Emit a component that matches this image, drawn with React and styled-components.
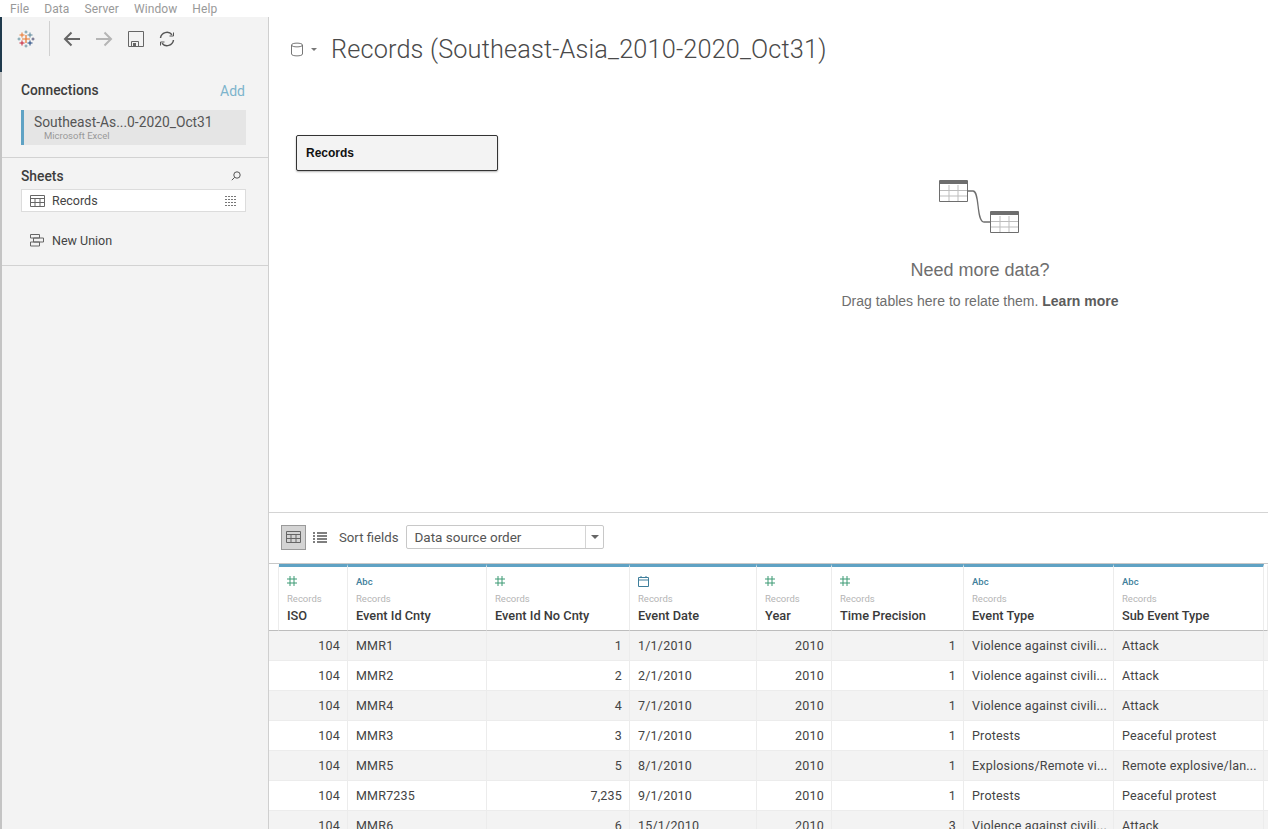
import styled, { createGlobalStyle } from 'styled-components';

const GlobalStyle = createGlobalStyle`
  html, body {
    margin: 0;
    padding: 0;
    background: #fff;
    overflow: hidden;
  }
  * {
    box-sizing: border-box;
  }
`;

const Page = styled.div`
  width: 1268px;
  height: 829px;
  display: flex;
  flex-direction: column;
  overflow: hidden;
  font-family: Roboto, "Liberation Sans", sans-serif;
  color: #333;
`;

const MenuBar = styled.div`
  height: 17px;
  flex: none;
  display: flex;
  gap: 15px;
  padding-left: 10px;
  align-items: center;
  font-size: 12px;
  letter-spacing: 0.1px;
  color: #999;
`;

const Main = styled.div`
  flex: 1;
  display: flex;
  min-height: 0;
`;

const Sidebar = styled.aside`
  width: 269px;
  flex: none;
  background: #f3f3f3;
  border-right: 1px solid #cfcfcf;
  border-left: 2px solid #c4c4c4;
  display: flex;
  flex-direction: column;
  position: relative;
`;

const EdgeMark = styled.div`
  position: absolute;
  left: -2px;
  top: 0;
  width: 2px;
  height: 55px;
  background: #1f3a4d;
`;

const Toolbar = styled.div`
  height: 39px;
  margin-top: 2px;
  display: flex;
  align-items: center;
  padding-left: 14px;
`;

const ToolDivider = styled.div`
  width: 1px;
  height: 35px;
  background: #d0d0d0;
  margin: 0 12px 0 13px;
`;

const ToolButton = styled.div`
  width: 20px;
  height: 20px;
  margin-right: ${(p) => p.$gap ?? 12}px;
  display: flex;
  align-items: center;
  justify-content: center;
`;

const Section = styled.section`
  padding: ${(p) => p.$padding};
  height: ${(p) => p.$height}px;
  flex: none;
  border-bottom: 1px solid #d2d2d2;
`;

const SectionHead = styled.div`
  display: flex;
  justify-content: space-between;
  align-items: center;
  height: 20px;
`;

const SectionTitle = styled.div`
  font-size: 13.8px;
  font-weight: 500;
  color: #3d3d3d;
`;

const AddLink = styled.div`
  font-size: 14px;
  line-height: 18px;
  padding-top: 2px;
  color: #7db4cc;
  margin-right: 23px;
`;

const ConnectionCard = styled.div`
  margin-top: 10px;
  width: 225px;
  height: 35px;
  background: #e5e5e5;
  border-left: 3px solid #5fa2c4;
  padding: 4px 0 0 10px;
`;

const ConnectionName = styled.div`
  font-size: 13.8px;
  line-height: 16px;
  color: #555;
`;

const ConnectionType = styled.div`
  font-size: 9.5px;
  line-height: 12px;
  color: #999;
  padding-left: 10px;
`;

const SheetRow = styled.div`
  width: 225px;
  height: 23px;
  margin-top: 3px;
  display: flex;
  align-items: center;
  background: #fff;
  border: 1px solid #dcdcdc;
  padding: 0 8px 0 8px;
  font-size: 12.5px;
  color: #444;
`;

const SheetLabel = styled.span`
  flex: 1;
  margin-left: ${(p) => p.$gap ?? 7}px;
`;

const UnionRow = styled.div`
  display: flex;
  align-items: center;
  margin: 18px 0 0 9px;
  height: 20px;
  font-size: 12.5px;
  color: #444;
`;

const Content = styled.main`
  flex: 1;
  min-width: 0;
  display: flex;
  flex-direction: column;
`;

const Canvas = styled.div`
  height: 496px;
  flex: none;
  border-bottom: 1px solid #d4d4d4;
`;

const TitleRow = styled.div`
  display: flex;
  align-items: center;
  height: 40px;
  margin-top: 12px;
  padding-left: 22px;
`;

const Title = styled.h1`
  margin: 0 0 0 14px;
  font-size: 25.3px;
  font-weight: 300;
  color: #4a4a4a;
  letter-spacing: 0.15px;
  white-space: nowrap;
`;

const DropArea = styled.div`
  display: flex;
  align-items: flex-start;
`;

const TableChip = styled.div`
  width: 202px;
  height: 36px;
  margin: 66px 0 0 27px;
  background: #f3f3f3;
  border: 1px solid #333;
  border-radius: 2px;
  box-shadow: 0 1px 2px rgba(0, 0, 0, 0.3);
  display: flex;
  align-items: center;
  padding-left: 9px;
  font-family: "Liberation Sans", Arial, sans-serif;
  font-size: 12px;
  font-weight: 700;
  color: #111;
`;

const Hint = styled.div`
  margin: 111px 0 0 342px;
  width: 280px;
  display: flex;
  flex-direction: column;
  align-items: center;
  font-family: "Liberation Sans", Arial, sans-serif;
  color: #6e6e6e;
`;

const HintTitle = styled.div`
  margin-top: 24px;
  font-size: 18px;
  line-height: 20px;
`;

const HintText = styled.div`
  margin-top: 13px;
  font-size: 14px;
  line-height: 16px;
  white-space: nowrap;

  b {
    color: #5c5c5c;
  }
`;

const SortBar = styled.div`
  height: 50px;
  flex: none;
  display: flex;
  align-items: center;
  padding: 0 0 2px 12px;
`;

const ViewToggle = styled.div`
  width: 25px;
  height: 25px;
  display: flex;
  align-items: center;
  justify-content: center;
  background: ${(p) => (p.$active ? '#d4d4d4' : 'transparent')};
  border: 1px solid ${(p) => (p.$active ? '#9a9a9a' : 'transparent')};
  margin-right: ${(p) => p.$gap ?? 0}px;
`;

const SortLabel = styled.span`
  font-size: 13.2px;
  color: #555;
  margin: 0 8px 0 6px;
`;

const SortSelect = styled.div`
  width: 198px;
  height: 24px;
  border: 1px solid #c8c8c8;
  border-radius: 2px;
  display: flex;
  align-items: center;
  font-size: 13.5px;
  color: #555;
  padding-left: 7px;
`;

const SortValue = styled.span`
  flex: 1;
`;

const Caret = styled.span`
  width: 18px;
  height: 22px;
  border-left: 1px solid #d4d4d4;
  display: flex;
  align-items: center;
  justify-content: center;

  &::after {
    content: '';
    border-left: 4px solid transparent;
    border-right: 4px solid transparent;
    border-top: 4px solid #666;
  }
`;

const Grid = styled.div`
  flex: 1;
  min-height: 0;
  overflow: hidden;
  display: grid;
  border-top: 1px solid #c8c8c8;
  grid-template-columns: 10px 69px 139px 143px 127px 75px 132px 150px 150px 4px;
  grid-auto-rows: 30px;
  grid-template-rows: 67px;
  align-content: start;
`;

const HeadCell = styled.div`
  border-top: 3px solid ${(p) => (p.$spacer ? 'transparent' : '#5fa2c4')};
  border-right: 1px solid #ececec;
  border-bottom: 1px solid #bdbdbd;
  padding: 8px 0 0 ${(p) => (p.$spacer ? 0 : 8)}px;
`;

const TypeIcon = styled.div`
  height: 12px;
  display: flex;
  align-items: center;
  font-size: 9.5px;
  font-weight: 500;
  color: #3f7f9c;
`;

const HeadSource = styled.div`
  font-size: 9.5px;
  line-height: 12px;
  margin-top: 6px;
  color: #b5b5b5;
`;

const HeadName = styled.div`
  font-size: 12.8px;
  line-height: 16px;
  margin-top: 3px;
  font-weight: 500;
  color: #3a3a3a;
  white-space: nowrap;
`;

const Cell = styled.div`
  background: ${(p) => (p.$odd ? '#f3f3f3' : '#fff')};
  border-right: 1px solid #ececec;
  border-bottom: 1px solid #ececec;
  display: flex;
  align-items: center;
  justify-content: ${(p) => (p.$right ? 'flex-end' : 'flex-start')};
  padding: 0 7px 0 8px;
  font-size: 12.5px;
  letter-spacing: 0.2px;
  color: #444;
  white-space: nowrap;
  overflow: hidden;
`;

const TableIcon = () => (
  <svg width="15" height="12" viewBox="0 0 15 12" fill="none" stroke="#666" strokeWidth="1">
    <path d="M.5.5h14v11H.5zM.5 3.500h14M.5 7.500h14M5 3.500v8M10 3.500v8" />
  </svg>
);

const HashIcon = () => (
  <svg width="10" height="10" viewBox="0 0 10 10" stroke="#3d9a75" strokeWidth="1" fill="none">
    <path d="M3 0v10M7 0v10M0 3h10M0 7h10" />
  </svg>
);

const CalendarIcon = () => (
  <svg width="11" height="11" viewBox="0 0 11 11" stroke="#3f7f9c" strokeWidth="1" fill="none">
    <path d="M.5 1.500h10v9H.5zM.5 4h10M3 0v2M8 0v2" />
  </svg>
);

const LogoIcon = () => (
  <svg width="18" height="18" viewBox="0 0 18 18" fill="none" strokeWidth="1">
    <path d="M9 5v8M5 9h8" stroke="#e8762d" strokeWidth="1.200" />
    <path d="M5 2.500v5M2.500 5h5" stroke="#e8762d" />
    <path d="M13 2.500v5M10.500 5h5" stroke="#5b879b" />
    <path d="M5 10.500v5M2.500 13h5" stroke="#c72035" />
    <path d="M13 10.500v5M10.500 13h5" stroke="#1f457e" />
    <path d="M9 .5v3M7.500 2h3M9 14.500v3M7.500 16h3" stroke="#7199a6" />
    <path d="M2 7.500v3M.5 9h3" stroke="#7199a6" />
    <path d="M16 7.500v3M14.500 9h3" stroke="#59597a" />
  </svg>
);

const BackIcon = () => (
  <svg width="18" height="16" viewBox="0 0 18 16" fill="none" stroke="#666" strokeWidth="2">
    <path d="M17 8H2M8.500 1.500 2 8l6.500 6.500" />
  </svg>
);

const ForwardIcon = () => (
  <svg width="18" height="16" viewBox="0 0 18 16" fill="none" stroke="#b5b5b5" strokeWidth="2">
    <path d="M1 8h15M9.500 1.500 16 8l-6.500 6.500" />
  </svg>
);

const SaveIcon = () => (
  <svg width="16" height="16" viewBox="0 0 16 16" fill="none" stroke="#666" strokeWidth="1">
    <path d="M.5.500h15v15H.5zM3.500 15.500v-5h7v5" />
    <rect x="5" y="12" width="3" height="3.500" fill="#666" stroke="none" />
  </svg>
);

const RefreshIcon = () => (
  <svg width="18" height="16" viewBox="0 0 18 16" fill="none" stroke="#555" strokeWidth="1.500">
    <path d="M2.500 7A6.500 6.500 0 0 1 14 3.800M15.500 9A6.500 6.500 0 0 1 4 12.200" />
    <path d="M11.500 5h4V1.500M6.500 11h-4v3.500" strokeWidth="1" />
  </svg>
);

const SearchIcon = () => (
  <svg width="10" height="10" viewBox="0 0 10 10" fill="none" stroke="#555" strokeWidth="1">
    <circle cx="6" cy="4" r="3.200" />
    <path d="M3.700 6.300.8 9.200" />
  </svg>
);

const GridRowsIcon = () => (
  <svg width="12" height="10" viewBox="0 0 12 10" stroke="#777" strokeWidth="1" fill="none">
    <path d="M0 .5h12M0 3.500h12M0 6.500h12M0 9.500h12" strokeDasharray="2 1" />
  </svg>
);

const UnionIcon = () => (
  <svg width="14" height="13" viewBox="0 0 14 13" fill="none" stroke="#666" strokeWidth="1">
    <path d="M.5.500h9v3.500h-9zM3.500 4h10v4h-10zM.5 8h9v4h-9z" />
  </svg>
);

const DatabaseIcon = () => (
  <svg width="12" height="15" viewBox="0 0 12 15" fill="none" stroke="#777" strokeWidth="1">
    <path d="M.5 3C.5.500 11.500.500 11.500 3v9c0 2.500-11 2.500-11 0zM.5 3c0 2.500 11 2.500 11 0" />
  </svg>
);

const SmallCaret = styled.span`
  margin-left: 8px;
  border-left: 3px solid transparent;
  border-right: 3px solid transparent;
  border-top: 3px solid #777;
`;

const ListIcon = () => (
  <svg width="14" height="11" viewBox="0 0 14 11" stroke="#555" strokeWidth="1.400" fill="none">
    <path d="M0 1h2M4 1h10M0 4h2M4 4h10M0 7h2M4 7h10M0 10h2M4 10h10" />
  </svg>
);

const RelateIcon = () => (
  <svg width="82" height="56" viewBox="0 0 82 56" fill="none">
    <g stroke="#6e6e6e" strokeWidth="1">
      <path d="M.5.500h28v21H.500z" fill="#fff" />
      <path d="M.5 1.500h28v2H.5z" fill="#6e6e6e" />
      <path d="M51.500 31.500h28v21h-28z" fill="#fff" />
      <path d="M51.500 32.500h28v2h-28z" fill="#6e6e6e" />
    </g>
    <path d="M1 10.500h27M1 16h27M10 5v16M19 5v16M52 41.500h27M52 47h27M61 36v16M70 36v16" stroke="#bdbdbd" />
    <path d="M29 11h5c7 0 3 31 11 31h6" stroke="#6e6e6e" strokeWidth="1.300" />
  </svg>
);

const columns = [
  { name: 'ISO', type: 'num', right: true },
  { name: 'Event Id Cnty', type: 'abc' },
  { name: 'Event Id No Cnty', type: 'num', right: true },
  { name: 'Event Date', type: 'date' },
  { name: 'Year', type: 'num', right: true },
  { name: 'Time Precision', type: 'num', right: true },
  { name: 'Event Type', type: 'abc' },
  { name: 'Sub Event Type', type: 'abc' },
];

const violence = 'Violence against civili...';

const rows = [
  ['104', 'MMR1', '1', '1/1/2010', '2010', '1', violence, 'Attack'],
  ['104', 'MMR2', '2', '2/1/2010', '2010', '1', violence, 'Attack'],
  ['104', 'MMR4', '4', '7/1/2010', '2010', '1', violence, 'Attack'],
  ['104', 'MMR3', '3', '7/1/2010', '2010', '1', 'Protests', 'Peaceful protest'],
  ['104', 'MMR5', '5', '8/1/2010', '2010', '1', 'Explosions/Remote vi...', 'Remote explosive/lan...'],
  ['104', 'MMR7235', '7,235', '9/1/2010', '2010', '1', 'Protests', 'Peaceful protest'],
  ['104', 'MMR6', '6', '15/1/2010', '2010', '3', violence, 'Attack'],
];

const typeIcon = (type) => {
  if (type === 'num') return <HashIcon />;
  if (type === 'date') return <CalendarIcon />;
  return 'Abc';
};

const App = () => {
  return (
    <Page>
      <GlobalStyle />
      <MenuBar>
        <span>File</span>
        <span>Data</span>
        <span>Server</span>
        <span>Window</span>
        <span>Help</span>
      </MenuBar>
      <Main>
        <Sidebar>
          <EdgeMark />
          <Toolbar>
            <ToolButton $gap={0}>
              <LogoIcon />
            </ToolButton>
            <ToolDivider />
            <ToolButton>
              <BackIcon />
            </ToolButton>
            <ToolButton>
              <ForwardIcon />
            </ToolButton>
            <ToolButton $gap={11}>
              <SaveIcon />
            </ToolButton>
            <ToolButton>
              <RefreshIcon />
            </ToolButton>
          </Toolbar>
          <Section $height={100} $padding="22px 0 0 19px">
            <SectionHead>
              <SectionTitle>Connections</SectionTitle>
              <AddLink>Add</AddLink>
            </SectionHead>
            <ConnectionCard>
              <ConnectionName>Southeast-As...0-2020_Oct31</ConnectionName>
              <ConnectionType>Microsoft Excel</ConnectionType>
            </ConnectionCard>
          </Section>
          <Section $height={108} $padding="8px 0 0 19px">
            <SectionHead>
              <SectionTitle>Sheets</SectionTitle>
              <ToolButton $gap={22}>
                <SearchIcon />
              </ToolButton>
            </SectionHead>
            <SheetRow>
              <TableIcon />
              <SheetLabel>Records</SheetLabel>
              <GridRowsIcon />
            </SheetRow>
            <UnionRow>
              <UnionIcon />
              <SheetLabel $gap={8}>New Union</SheetLabel>
            </UnionRow>
          </Section>
        </Sidebar>
        <Content>
          <Canvas>
            <TitleRow>
              <DatabaseIcon />
              <SmallCaret />
              <Title>Records (Southeast-Asia_2010-2020_Oct31)</Title>
            </TitleRow>
            <DropArea>
              <TableChip>Records</TableChip>
              <Hint>
                <RelateIcon />
                <HintTitle>Need more data?</HintTitle>
                <HintText>
                  Drag tables here to relate them. <b>Learn more</b>
                </HintText>
              </Hint>
            </DropArea>
          </Canvas>
          <SortBar>
            <ViewToggle $active $gap={1}>
              <TableIcon />
            </ViewToggle>
            <ViewToggle $gap={1}>
              <ListIcon />
            </ViewToggle>
            <SortLabel>Sort fields</SortLabel>
            <SortSelect>
              <SortValue>Data source order</SortValue>
              <Caret />
            </SortSelect>
          </SortBar>
          <Grid>
            <HeadCell $spacer />
            {columns.map((col) => (
              <HeadCell key={col.name}>
                <TypeIcon>{typeIcon(col.type)}</TypeIcon>
                <HeadSource>Records</HeadSource>
                <HeadName>{col.name}</HeadName>
              </HeadCell>
            ))}
            <HeadCell $spacer />
            {rows.map((row, r) => [
              <Cell key={`${r}-start`} $odd={r % 2 === 0} />,
              ...row.map((value, c) => (
                <Cell key={`${r}-${c}`} $odd={r % 2 === 0} $right={columns[c].right}>
                  {value}
                </Cell>
              )),
              <Cell key={`${r}-end`} $odd={r % 2 === 0} />,
            ])}
          </Grid>
        </Content>
      </Main>
    </Page>
  );
};

export default App;
